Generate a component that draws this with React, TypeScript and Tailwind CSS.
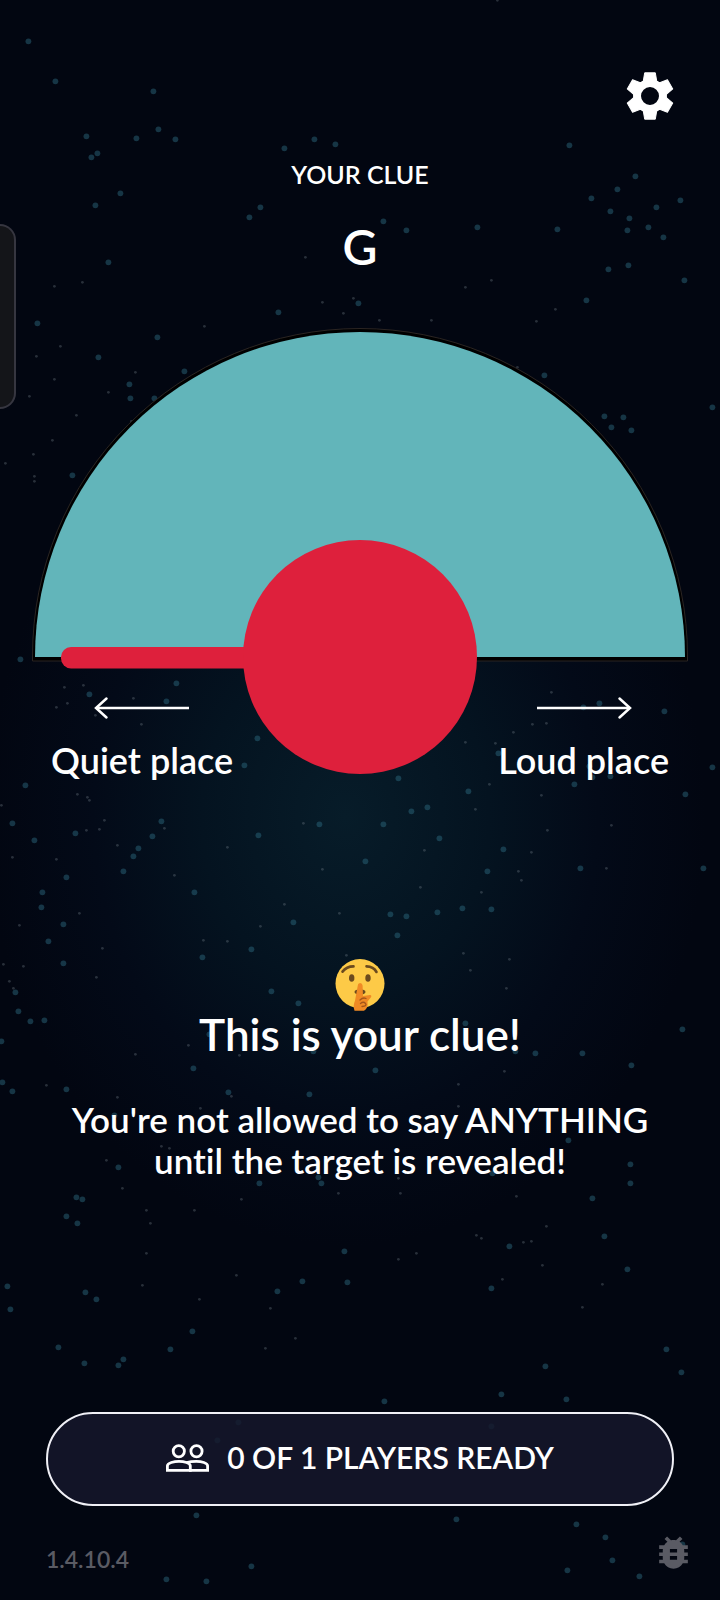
import { MdBugReport } from "react-icons/md";

type Star = [x: number, y: number];

const brightStars: Star[] = [
  [28, 41], [55, 81], [153, 91], [86, 136], [136, 138], [158, 129], [175, 139], [97, 153], [91, 157],
  [120, 193], [95, 205], [108, 262], [284, 148], [314, 139], [335, 144], [260, 207], [249, 217], [278, 312],
  [358, 303], [383, 221], [406, 230], [477, 227], [557, 229], [569, 145], [635, 176], [617, 189],
  [591, 198], [610, 211], [656, 207], [680, 200], [629, 218], [627, 230], [648, 227], [663, 237], [608, 269],
  [628, 265], [684, 280], [586, 300], [37, 323], [157, 337], [184, 371], [129, 384], [130, 398], [154, 398],
  [98, 357], [72, 475], [544, 375], [604, 416], [623, 417], [611, 427], [631, 430], [712, 407], [20, 659],
  [176, 683], [89, 694], [166, 701], [257, 738], [244, 765], [25, 785], [12, 823], [34, 840], [75, 833],
  [161, 821], [152, 836], [138, 848], [133, 856], [123, 871], [66, 877], [42, 892], [41, 907], [63, 924],
  [48, 941], [194, 892], [258, 835], [319, 824], [293, 922], [251, 949], [202, 957], [664, 711], [583, 707],
  [599, 703], [712, 767], [685, 794], [610, 776], [592, 777], [574, 784], [589, 766], [498, 753], [468, 791],
  [398, 778], [427, 807], [411, 811], [383, 824], [439, 838], [365, 861], [503, 849], [487, 871], [580, 868],
  [703, 868], [462, 908], [491, 909], [437, 912], [390, 914], [406, 916], [397, 935], [63, 963], [15, 992],
  [18, 1011], [30, 1021], [44, 1020], [1, 1041], [2, 1082], [12, 1091], [66, 1089], [271, 991], [298, 1003],
  [313, 1051], [209, 1034], [193, 1068], [228, 1092], [309, 1094], [114, 1115], [118, 1167], [259, 1183],
  [318, 1177], [321, 1183], [76, 1197], [82, 1199], [66, 1216], [77, 1223], [465, 1023], [515, 1051],
  [535, 1053], [582, 1053], [682, 1029], [631, 1065], [375, 1070], [568, 1140], [630, 1164], [630, 1183],
  [592, 1198], [492, 1173], [604, 1236], [509, 1246], [627, 1269], [491, 1288], [7, 1286], [10, 1309],
  [85, 1292], [96, 1299], [58, 1347], [84, 1363], [123, 1359], [118, 1365], [170, 1349], [192, 1331],
  [277, 1291], [302, 1281], [347, 1282], [344, 1251], [666, 1349], [681, 1372], [545, 1366], [501, 1394],
  [566, 1399], [384, 1401], [238, 1422], [217, 1440], [491, 1426], [196, 1515], [166, 1579], [206, 1581],
  [251, 1566], [456, 1519], [576, 1524], [605, 1537], [612, 1560], [567, 1570], [639, 1576], [682, 1544],
];

const faintStars: Star[] = [
  [54, 286], [82, 282], [305, 257], [322, 302], [353, 298], [343, 313], [465, 287], [491, 280], [555, 309],
  [497, 0], [379, 320], [431, 320], [536, 321], [204, 326], [60, 346], [36, 356], [54, 379], [29, 396],
  [108, 392], [135, 372], [76, 415], [52, 440], [33, 454], [5, 463], [34, 476], [34, 481], [131, 421],
  [517, 367], [64, 687], [83, 685], [67, 703], [56, 707], [133, 698], [95, 715], [141, 724], [77, 794],
  [87, 797], [89, 800], [1, 805], [104, 820], [86, 830], [99, 829], [164, 828], [117, 845], [56, 859],
  [12, 857], [79, 913], [19, 925], [102, 948], [227, 847], [174, 875], [284, 904], [260, 926], [203, 940],
  [227, 941], [303, 823], [322, 869], [339, 913], [551, 692], [532, 724], [513, 732], [546, 723], [495, 743],
  [465, 742], [489, 784], [541, 795], [547, 830], [611, 825], [606, 868], [531, 852], [518, 871], [521, 880],
  [481, 892], [420, 887], [424, 850], [475, 809], [346, 955], [463, 953], [509, 959], [470, 970], [506, 988],
  [3, 964], [23, 966], [9, 981], [13, 988], [96, 977], [135, 1054], [46, 1085], [117, 1097], [188, 1045],
  [239, 1055], [231, 1096], [200, 1108], [161, 1146], [169, 1148], [106, 1160], [122, 1188], [146, 1210],
  [150, 1223], [194, 1210], [241, 1199], [338, 1193], [504, 1071], [458, 1084], [458, 1106], [398, 1178],
  [516, 1196], [400, 1193], [546, 1226], [476, 1235], [481, 1238], [523, 1242], [531, 1241], [416, 1253],
  [398, 1259], [542, 1265], [502, 1279], [602, 1284], [582, 1307], [146, 1253], [142, 1285], [199, 1299],
  [236, 1275], [270, 1308], [295, 1338], [265, 1348],
];

function StarField() {
  return (
    <svg
      className="absolute inset-0 size-full"
      viewBox="0 0 720 1600"
      preserveAspectRatio="xMidYMid slice"
      aria-hidden="true"
    >
      <g fill="#2f6f86" fillOpacity="0.45">
        {brightStars.map(([x, y]) => (
          <circle key={`${x}-${y}`} cx={x + 0.4} cy={y + 0.3} r="2.9" />
        ))}
      </g>
      <g fill="#7a8790" fillOpacity="0.32">
        {faintStars.map(([x, y]) => (
          <circle key={`${x}-${y}`} cx={x + 0.4} cy={y + 0.3} r="1.4" />
        ))}
      </g>
    </svg>
  );
}

const toothAngles = [0, 60, 120, 180, 240, 300];

function Gear() {
  return (
    <svg className="size-14" viewBox="-28 -28 56 56" aria-hidden="true">
      <circle r="12.900" fill="none" stroke="currentColor" strokeWidth="7.800" />
      {toothAngles.map((angle) => (
        <path
          key={angle}
          d="M-5.300-23.200H5.300L6.700-15Q7.500-13.500 9-13.400L6-11.500Q0-14-6-11.500L-9-13.400Q-7.500-13.500-6.700-15Z"
          transform={`rotate(${angle})`}
          fill="currentColor"
          stroke="currentColor"
          strokeLinejoin="round"
        />
      ))}
    </svg>
  );
}

function People() {
  return (
    <svg className="h-7 w-[43px]" viewBox="0 0 43 28" fill="none" stroke="currentColor" strokeWidth="2.800" aria-hidden="true">
      <circle cx="12.800" cy="7.200" r="5.600" />
      <circle cx="30.500" cy="7.200" r="5.600" />
      <path d="M1.400 26.300V21.700C1.400 19 8 17.300 13 17.300S24.300 19 24.300 21.700V26.300Z" />
      <path d="M20.500 18.600Q25 17.300 30.300 17.300C35.500 17.300 41.600 19 41.600 21.700V26.300H23" />
    </svg>
  );
}

function Dial() {
  return (
    <svg className="col-start-1 row-start-1 w-full" viewBox="0 0 656 446" role="img" aria-label="Dial pointing at Quiet place">
      <path d="M.5 333V328A327.5 327.5 0 0 1 655.500 328V333Z" fill="#000" stroke="#2b2523" />
      <path d="M3 329A325 325 0 0 1 653 329Z" fill="#62b5ba" />
      <rect x="29" y="319" width="240" height="21.500" rx="10" fill="#de203c" />
      <circle cx="328" cy="329" r="117" fill="#de203c" />
    </svg>
  );
}

function Arrow({ right = false }: { right?: boolean }) {
  return (
    <svg className="h-6 w-24" viewBox="0 0 96 24" fill="none" stroke="#fff" strokeWidth="2.500" strokeLinecap="round" aria-hidden="true">
      {right ? (
        <>
          <path d="M1 12H94" strokeLinecap="butt" />
          <path d="M83.500 2.500 94 12 83.500 21.500" />
        </>
      ) : (
        <>
          <path d="M2 12H95" strokeLinecap="butt" />
          <path d="M12.500 2.500 2 12 12.500 21.500" />
        </>
      )}
    </svg>
  );
}

function HushFace() {
  return (
    <svg className="h-[52px] w-[50px]" viewBox="0 0 50 52" role="img" aria-label="Shushing face">
      <circle cx="25" cy="24.600" r="24.500" fill="#fdca47" />
      <g fill="none" stroke="#6b4a1e" strokeWidth="2.600" strokeLinecap="round">
        <path d="M7.500 12.600Q11.500 7.400 18.500 7.400" />
        <path d="M31.500 7.400Q38.500 7.600 41.500 13" />
      </g>
      <ellipse cx="16.700" cy="19" rx="2.700" ry="3.800" fill="#6b4a1e" />
      <ellipse cx="33" cy="19" rx="2.700" ry="3.800" fill="#6b4a1e" />
      <ellipse cx="25" cy="33" rx="5.500" ry="2.700" fill="#6b4a1e" />
      <path
        d="M22.800 26.500q0-2.500 2.300-2.500t2.500 2.500L28 37l7-1q2 .2 1 2.300l-3.500 4.200q1 7-3.500 9.200h-9.500q-1.800-5 .5-10Z"
        fill="#f08a24"
      />
      <path d="M25 41q3-3 6-1.500M25.500 44.500q3-2.500 5 0t-3.500 3" fill="none" stroke="#a5561a" strokeWidth="1.300" strokeLinecap="round" />
    </svg>
  );
}

export default function App() {
  return (
    <div className="relative min-h-screen overflow-hidden bg-[#020611] bg-[radial-gradient(ellipse_360px_430px_at_48%_51%,#071c29_0%,#041320_40%,#030a18_70%,#020611_100%)] font-['Lato','Noto_Sans',sans-serif] font-semibold text-white [font-variant-ligatures:none]">
      <StarField />
      <div className="absolute top-[224px] left-0 h-[185px] w-4 rounded-r-2xl border-2 border-l-0 border-[#363640] bg-[#141519]" />

      <main className="relative flex min-h-screen flex-col">
        <header className="flex justify-end px-[42px] pt-[68px]">
          <button type="button" aria-label="Settings">
            <Gear />
          </button>
        </header>

        <section className="mt-[34px] flex flex-col items-center text-center">
          <h1 className="text-[25px] leading-[32px]">YOUR CLUE</h1>
          <p className="mt-7 text-[48px] leading-[58px]">G</p>
        </section>

        <section className="mt-[52px] grid px-8">
          <Dial />
          <div className="col-start-1 row-start-1 -mb-2 flex items-end justify-between self-end px-[19px] text-[36px] leading-[44px]">
            <div className="flex flex-col items-center gap-[18px]">
              <Arrow />
              <span>Quiet place</span>
            </div>
            <div className="flex flex-col items-center gap-[18px]">
              <Arrow right />
              <span>Loud place</span>
            </div>
          </div>
        </section>

        <section className="mt-[185px] flex flex-col items-center px-12 text-center">
          <HushFace />
          <h2 className="text-[44px] leading-[46px]">This is your clue!</h2>
          <p className="mt-[42px] text-[35px] leading-[41px]">
            You're not allowed to say ANYTHING
            <br />
            until the target is revealed!
          </p>
        </section>

        <footer className="mt-auto flex flex-col px-[46px] pb-[26px]">
          <button
            type="button"
            className="flex h-[94px] items-center justify-center gap-[18px] rounded-full border-2 border-[#f0f0f6] bg-[#15172b]/85 pb-[3px] text-[30px]"
          >
            <People />
            <span>0 OF 1 PLAYERS READY</span>
          </button>
          <div className="mt-[25px] flex items-end justify-between text-[23px] leading-[30px] text-[#5a5b64]">
            <span>1.4.10.4</span>
            <button type="button" aria-label="Report a bug" className="-mr-[21px]">
              <MdBugReport className="size-[43px]" />
            </button>
          </div>
        </footer>
      </main>
    </div>
  );
}
